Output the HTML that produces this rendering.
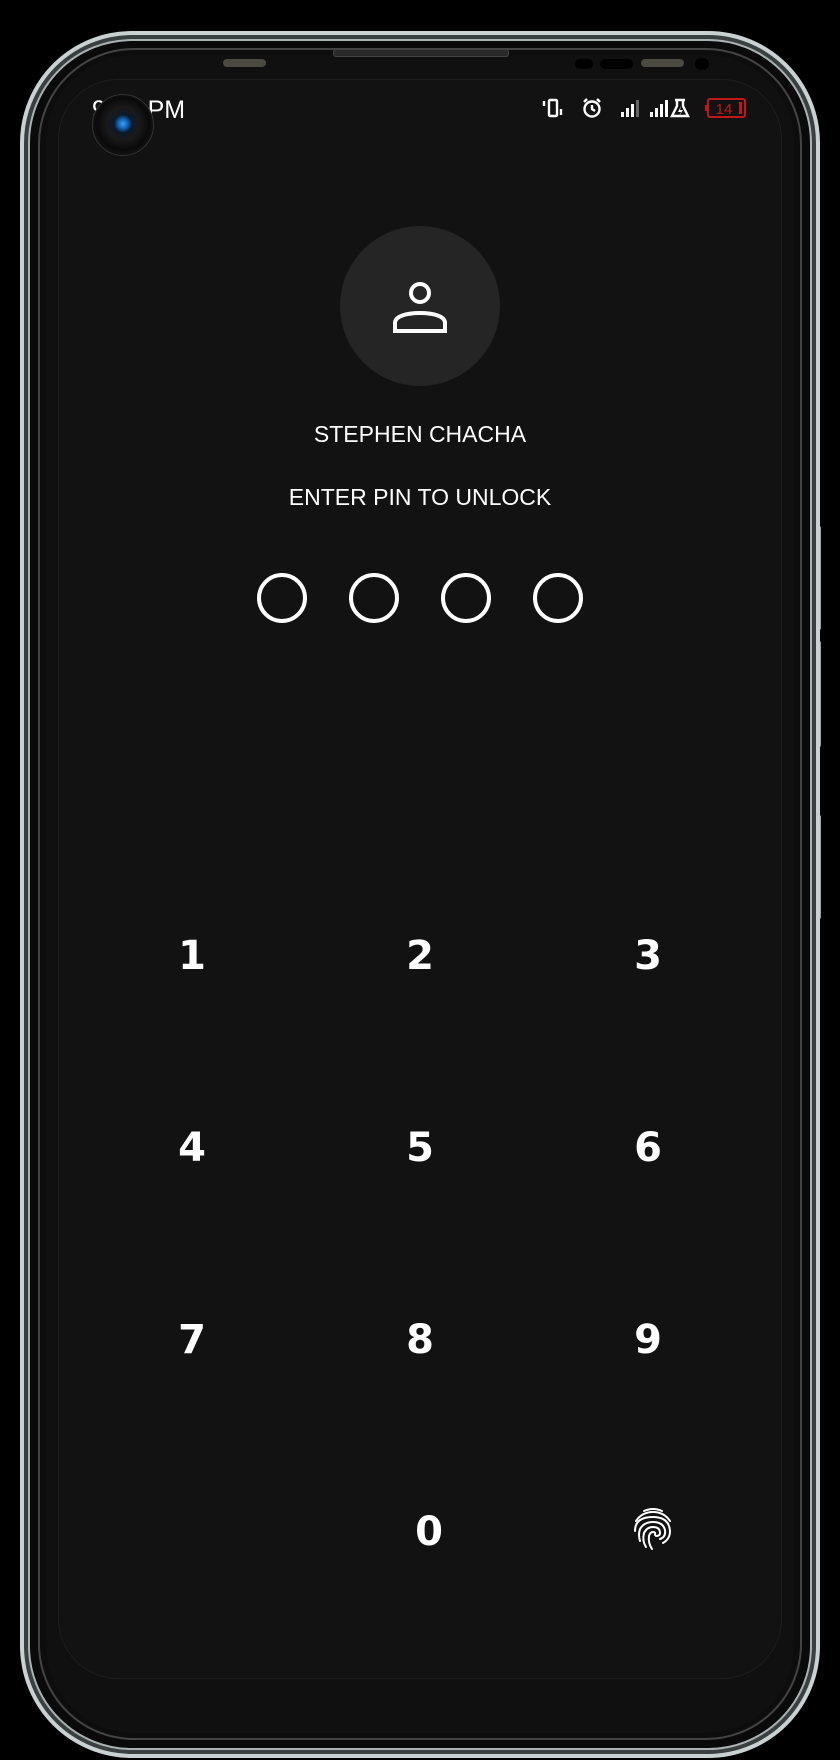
<!DOCTYPE html>
<html><head><meta charset="utf-8"><style>
html,body{margin:0;padding:0;background:#000;}
body{width:840px;height:1760px;position:relative;overflow:hidden;font-family:"Liberation Sans",sans-serif;color:#fff;}
.abs{position:absolute;}
.f1{left:20px;top:31px;width:800px;height:1727px;border-radius:112px;background:#c9d1d2;}
.f2{left:24px;top:35px;width:792px;height:1719px;border-radius:108px;background:#3a3f40;}
.f3{left:28px;top:39px;width:784px;height:1711px;border-radius:104px;background:#0a0a0a;border:2px solid #aab2b3;box-sizing:border-box;}
.f4{left:38px;top:48px;width:764px;height:1692px;border-radius:96px;background:#0d0d0d;border:2px solid #444;box-sizing:border-box;}
.f5{left:46px;top:55px;width:748px;height:1678px;border-radius:88px;background:#101010;}
.scr{left:58px;top:79px;width:724px;height:1600px;border-radius:60px;background:#121212;border:1px solid #1e1e1e;box-sizing:border-box;}
.key{position:absolute;width:80px;margin-left:-40px;text-align:center;font-weight:bold;font-size:40px;line-height:40px;font-family:"DejaVu Sans","Liberation Sans",sans-serif;}
.pin{position:absolute;width:42px;height:42px;border:4px solid #fff;border-radius:50%;top:573px;}
.btn{position:absolute;left:815px;width:6px;border-radius:2px;background:#9aa3a4;}
</style></head><body>
<div class="btn" style="top:526px;height:104px"></div>
<div class="btn" style="top:641px;height:106px"></div>
<div class="btn" style="top:815px;height:104px"></div>
<div class="abs f1"></div>
<div class="abs f2"></div>
<div class="abs f3"></div>
<div class="abs f4"></div>
<div class="abs f5"></div>
<div class="abs" style="left:333px;top:49px;width:174px;height:6px;border-radius:3px;background:#2a2a2a;border:1px solid #444"></div>
<div class="abs" style="left:223px;top:59px;width:43px;height:8px;border-radius:4px;background:#4a4a40"></div>
<div class="abs" style="left:641px;top:59px;width:43px;height:8px;border-radius:4px;background:#4a4a40"></div>
<div class="abs" style="left:575px;top:59px;width:18px;height:10px;border-radius:5px;background:#000"></div>
<div class="abs" style="left:600px;top:59px;width:33px;height:10px;border-radius:5px;background:#000"></div>
<div class="abs" style="left:695px;top:58px;width:14px;height:12px;border-radius:6px;background:#000"></div>
<div class="abs scr"></div>
<div class="abs" style="left:92px;top:96px;font-size:25px;line-height:28px;">9:41 PM</div>
<div class="abs" style="left:92px;top:94px;width:62px;height:62px;border-radius:50%;background:radial-gradient(circle at 50% 48%,#3aa0ff 0,#1060b0 5px,#0b1a2a 9px,#1a1a1a 16px,#0a0a0a 26px,#111 31px);border:1px solid #333;box-sizing:border-box"></div>
<svg class="abs" style="left:540px;top:96px" width="210" height="26" viewBox="0 0 210 26">
<g fill="none" stroke="#fff" stroke-width="2.4">
<rect x="9" y="4" width="8" height="16" rx="1"/>
<line x1="4" y1="5" x2="4" y2="10"/><line x1="21" y1="13" x2="21" y2="19"/>
<circle cx="52" cy="13" r="7.5"/><path d="M52 9v4l3 2M44 6l3-3M60 6l-3-3"/>
<path d="M135 4h10M137 4v6l-5 10h16l-5-10V4"/>
</g>
<g fill="#fff"><rect x="81" y="16" width="3" height="5"/><rect x="86" y="12" width="3" height="9"/><rect x="91" y="8" width="3" height="13"/>
<rect x="96" y="4" width="3" height="17" fill="#666"/>
<rect x="110" y="16" width="3" height="5"/><rect x="115" y="12" width="3" height="9"/><rect x="120" y="8" width="3" height="13"/><rect x="125" y="4" width="3" height="17"/>
<path d="M141 10l-3 6h3l-2 4 4-6h-3z"/></g>
<rect x="168" y="3" width="37" height="18" rx="2" fill="none" stroke="#c01818" stroke-width="2"/>
<rect x="165" y="9" width="3" height="6" fill="#c01818"/>
<rect x="199" y="6" width="3" height="12" fill="#c01818"/>
<text x="184" y="18" fill="#c01818" font-size="15" font-family="Liberation Sans" text-anchor="middle">14</text>
</svg>
<div class="abs" style="left:340px;top:226px;width:160px;height:160px;border-radius:50%;background:#252525"></div>
<svg class="abs" style="left:390px;top:276px" width="60" height="60" viewBox="0 0 60 60">
<g fill="none" stroke="#fff" stroke-width="4"><circle cx="30" cy="17" r="9"/><path d="M5 55V47C5 40 17 37 30 37S55 40 55 47V55Z"/></g>
</svg>
<div class="abs" style="left:0;width:840px;top:419px;text-align:center;font-size:23px;line-height:30px;">STEPHEN CHACHA</div>
<div class="abs" style="left:0;width:840px;top:482px;text-align:center;font-size:23px;line-height:30px;">ENTER PIN TO UNLOCK</div>
<div class="pin" style="left:257px"></div>
<div class="pin" style="left:349px"></div>
<div class="pin" style="left:441px"></div>
<div class="pin" style="left:533px"></div>
<div class="key" style="left:192px;top:936px">1</div>
<div class="key" style="left:420px;top:936px">2</div>
<div class="key" style="left:648px;top:936px">3</div>
<div class="key" style="left:192px;top:1128px">4</div>
<div class="key" style="left:420px;top:1128px">5</div>
<div class="key" style="left:648px;top:1128px">6</div>
<div class="key" style="left:192px;top:1320px">7</div>
<div class="key" style="left:420px;top:1320px">8</div>
<div class="key" style="left:648px;top:1320px">9</div>
<div class="key" style="left:429px;top:1512px">0</div>
<svg class="abs" style="left:632px;top:1507px" width="42" height="44" viewBox="0 0 42 44">
<g fill="none" stroke="#fff" stroke-width="2" stroke-linecap="round">
<path d="M12 4Q21 0 30 4"/>
<path d="M4 14Q10 5 21 5Q32 5 38 14"/>
<path d="M3 24Q3 10 21 10Q37 10 38 24Q38 32 31 36"/>
<path d="M8 34Q6 28 8 22Q12 15 21 15Q31 15 33 23Q34 30 28 32"/>
<path d="M14 40Q10 34 12 26Q15 20 21 20Q28 20 28 26Q28 29 24 29"/>
<path d="M20 42Q16 36 17 29Q18 25 21 25Q24 25 23 28"/>
</g></svg>
</body></html>
